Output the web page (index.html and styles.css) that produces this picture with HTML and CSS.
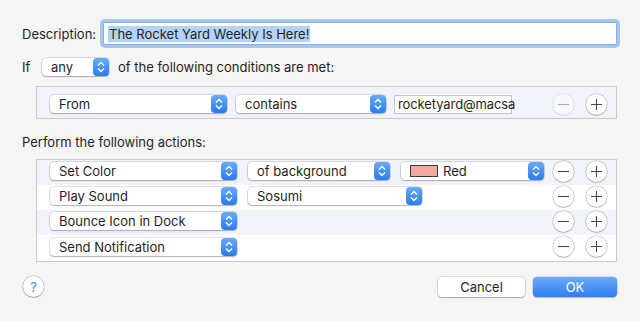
FILE: index.html
```html
<!DOCTYPE html>
<html lang="en">
<head>
  <meta charset="UTF-8" />
  <title>Rule editor</title>
  <link rel="stylesheet" href="styles.css">
</head>
<body>
  <div class="sheet">
    <div class="line desc">
      <span class="label">Description:</span>
      <div class="field focus"><span class="sel">The Rocket Yard Weekly Is Here!</span></div>
    </div>

    <div class="line head">
      <span class="if">If</span>
      <div class="popup w-any"><span>any</span><i class="step"><svg width="16" height="18" viewBox="0 0 16 18"><path d="M5 7.5 8 4.5 11 7.5M5 10.5 8 13.5 11 10.5"/></svg></i></div>
      <span class="after">of the following conditions are met:</span>
    </div>

    <div class="box cond">
      <div class="row">
        <div class="popup w-from"><span>From</span><i class="step"><svg width="16" height="18" viewBox="0 0 16 18"><path d="M5 7.5 8 4.5 11 7.5M5 10.5 8 13.5 11 10.5"/></svg></i></div>
        <div class="popup w-contains"><span>contains</span><i class="step"><svg width="16" height="18" viewBox="0 0 16 18"><path d="M5 7.5 8 4.5 11 7.5M5 10.5 8 13.5 11 10.5"/></svg></i></div>
        <div class="text w-addr">rocketyard@macsa</div>
        <div class="pm">
          <button class="round off"><svg width="21" height="21" viewBox="0 0 21 21"><path d="M5 10.5h11"/></svg></button>
          <button class="round"><svg width="21" height="21" viewBox="0 0 21 21"><path d="M5 10.5h11M10.5 5v11"/></svg></button>
        </div>
      </div>
    </div>

    <div class="caption">Perform the following actions:</div>

    <div class="box actions">
      <div class="row">
        <div class="popup w-act"><span>Set Color</span><i class="step"><svg width="16" height="18" viewBox="0 0 16 18"><path d="M5 7.5 8 4.5 11 7.5M5 10.5 8 13.5 11 10.5"/></svg></i></div>
        <div class="popup w-of"><span>of background</span><i class="step"><svg width="16" height="18" viewBox="0 0 16 18"><path d="M5 7.5 8 4.5 11 7.5M5 10.5 8 13.5 11 10.5"/></svg></i></div>
        <div class="popup w-color"><span><b class="swatch"></b>Red</span><i class="step"><svg width="16" height="18" viewBox="0 0 16 18"><path d="M5 7.5 8 4.5 11 7.5M5 10.5 8 13.5 11 10.5"/></svg></i></div>
        <div class="pm">
          <button class="round"><svg width="21" height="21" viewBox="0 0 21 21"><path d="M5 10.5h11"/></svg></button>
          <button class="round"><svg width="21" height="21" viewBox="0 0 21 21"><path d="M5 10.5h11M10.5 5v11"/></svg></button>
        </div>
      </div>
      <div class="row">
        <div class="popup w-act"><span>Play Sound</span><i class="step"><svg width="16" height="18" viewBox="0 0 16 18"><path d="M5 7.5 8 4.5 11 7.5M5 10.5 8 13.5 11 10.5"/></svg></i></div>
        <div class="popup w-sound"><span>Sosumi</span><i class="step"><svg width="16" height="18" viewBox="0 0 16 18"><path d="M5 7.5 8 4.5 11 7.5M5 10.5 8 13.5 11 10.5"/></svg></i></div>
        <div class="pm">
          <button class="round"><svg width="21" height="21" viewBox="0 0 21 21"><path d="M5 10.5h11"/></svg></button>
          <button class="round"><svg width="21" height="21" viewBox="0 0 21 21"><path d="M5 10.5h11M10.5 5v11"/></svg></button>
        </div>
      </div>
      <div class="row">
        <div class="popup w-act"><span>Bounce Icon in Dock</span><i class="step"><svg width="16" height="18" viewBox="0 0 16 18"><path d="M5 7.5 8 4.5 11 7.5M5 10.5 8 13.5 11 10.5"/></svg></i></div>
        <div class="pm">
          <button class="round"><svg width="21" height="21" viewBox="0 0 21 21"><path d="M5 10.5h11"/></svg></button>
          <button class="round"><svg width="21" height="21" viewBox="0 0 21 21"><path d="M5 10.5h11M10.5 5v11"/></svg></button>
        </div>
      </div>
      <div class="row">
        <div class="popup w-act"><span>Send Notification</span><i class="step"><svg width="16" height="18" viewBox="0 0 16 18"><path d="M5 7.5 8 4.5 11 7.5M5 10.5 8 13.5 11 10.5"/></svg></i></div>
        <div class="pm">
          <button class="round"><svg width="21" height="21" viewBox="0 0 21 21"><path d="M5 10.5h11"/></svg></button>
          <button class="round"><svg width="21" height="21" viewBox="0 0 21 21"><path d="M5 10.5h11M10.5 5v11"/></svg></button>
        </div>
      </div>
    </div>

    <div class="footer">
      <button class="help">?</button>
      <button class="btn cancel">Cancel</button>
      <button class="btn ok">OK</button>
    </div>
  </div>
</body>
</html>
```

FILE: styles.css
```css
* {
  margin: 0;
  padding: 0;
  box-sizing: border-box;
}
body {
  background: #f5f5f5;
  font-family: 'Inter', 'Liberation Sans', sans-serif;
  font-size: 13px;
  color: #1f1f1f;
  width: 640px;
  height: 321px;
  overflow: hidden;
}
.sheet {
  padding: 22px 23px 0 22px;
}
.line {
  display: flex;
  align-items: center;
}
.desc .label {
  width: 81px;
}
.field {
  flex: 1;
  height: 23px;
  background: #fff;
  border: 1px solid #87aee6;
  border-radius: 2px;
  padding-left: 4px;
  display: flex;
  align-items: center;
}
.field.focus {
  box-shadow: 0 0 0 3px #a8c5ee;
}
.sel {
  background: #b5d3f6;
  line-height: 16px;
  padding: 0 1px;
}
.head {
  margin-top: 13px;
}
.if {
  width: 20px;
}
.after {
  margin-left: 9px;
}

/* popup buttons */
.popup {
  height: 18px;
  background: #fff;
  border-radius: 4px;
  box-shadow: 0 0 0 0.5px rgba(0, 0, 0, 0.22), 0 1px 1.5px rgba(0, 0, 0, 0.22);
  display: flex;
  align-items: center;
  justify-content: space-between;
  flex: none;
}
.popup span {
  padding-left: 9px;
  display: flex;
  align-items: center;
  white-space: nowrap;
}
.step {
  width: 16px;
  height: 18px;
  border-radius: 4px;
  background: linear-gradient(#6aabf8, #2a7bee);
  display: block;
}
.step svg {
  display: block;
}
.step path {
  fill: none;
  stroke: #fff;
  stroke-width: 1.4;
}
.w-any { width: 67px; }
.w-from { width: 177px; }
.w-contains { width: 150px; margin-left: 9px; }
.w-act { width: 187px; }
.w-of { width: 142px; margin-left: 11px; }
.w-color { width: 143px; margin-left: 11px; }
.w-sound { width: 174px; margin-left: 11px; }
.swatch {
  width: 28px;
  height: 12px;
  background: #f3a9a1;
  border: 1px solid #3a3a3a;
  margin-right: 5px;
}

.text {
  height: 19px;
  background: #fff;
  border: 1px solid #c4c4c4;
  padding-left: 3px;
  line-height: 17px;
  letter-spacing: -0.1px;
  white-space: nowrap;
  flex: none;
}
.w-addr { width: 118px; margin-left: 8px; }

/* bordered lists */
.box {
  margin-left: 14px;
  border: 1px solid #cacaca;
  background: #fff;
}
.cond {
  margin-top: 10px;
  background: #f0f4fa;
}
.row {
  display: flex;
  align-items: center;
  padding: 2px 9px 5px 13px;
  height: 25px;
}
.cond .row {
  height: 31px;
  padding: 7px 9px 4px 13px;
}
.actions .row:nth-child(odd) {
  background: #f0f4fa;
}
.actions .row:last-child {
  height: 26px;
}
.pm {
  margin-left: auto;
  display: flex;
  gap: 12px;
}
.round {
  width: 21px;
  height: 21px;
  border-radius: 50%;
  border: none;
  background: #fff;
  box-shadow: 0 0 0 0.5px rgba(0, 0, 0, 0.25), 0 1px 1px rgba(0, 0, 0, 0.15);
}
.round svg {
  display: block;
}
.round path {
  stroke: #4a4a4a;
  stroke-width: 1.1;
  fill: none;
}
.round.off {
  opacity: 0.4;
}
.caption {
  margin-top: 15px;
  line-height: 16px;
}
.actions {
  margin-top: 9px;
}

.footer {
  display: flex;
  align-items: center;
  margin-top: 14px;
  padding-left: 1px;
}
.help {
  width: 21px;
  height: 21px;
  border-radius: 50%;
  border: none;
  background: #fff;
  box-shadow: 0 0 0 0.5px rgba(0, 0, 0, 0.25), 0 1px 1px rgba(0, 0, 0, 0.2);
  color: #3f7fd6;
  font-family: 'Inter', 'Liberation Sans', sans-serif;
  font-size: 13px;
  margin-right: auto;
}
.btn {
  height: 20px;
  border: none;
  border-radius: 4px;
  font-family: 'Inter', 'Liberation Sans', sans-serif;
  font-size: 13px;
}
.cancel {
  width: 87px;
  background: #fff;
  color: #1f1f1f;
  box-shadow: 0 0 0 0.5px rgba(0, 0, 0, 0.22), 0 1px 1.5px rgba(0, 0, 0, 0.22);
}
.ok {
  width: 84px;
  margin-left: 8px;
  color: #fff;
  background: linear-gradient(#6aabf8, #2f7ff0);
  box-shadow: 0 0 0 0.5px rgba(0, 60, 160, 0.3), 0 1px 1px rgba(0, 0, 0, 0.15);
}
```
